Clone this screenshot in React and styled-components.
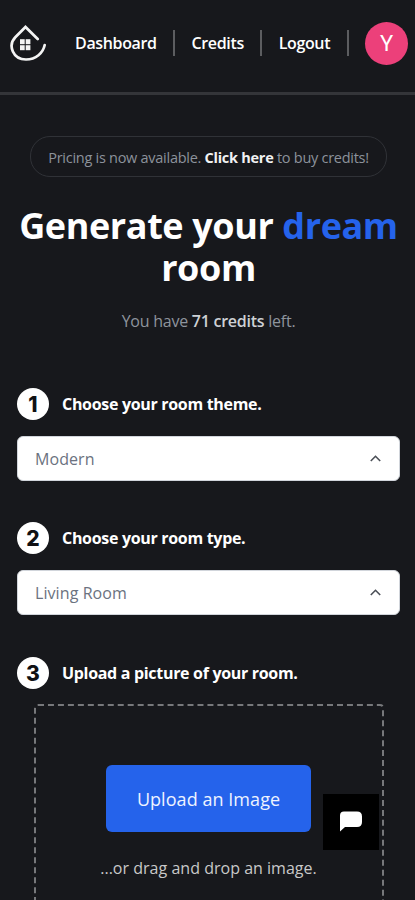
import React from "react";
import styled, { createGlobalStyle } from "styled-components";

const GlobalStyle = createGlobalStyle`
    * {
        box-sizing: border-box;
    }
    html, body {
        margin: 0;
        height: 100%;
        overflow: hidden;
        background-color: #17181c;
    }
    body {
        font-family: "Open Sans", "Noto Sans", sans-serif;
        color: #fff;
    }
`

const Root = styled.div`
    width: 100%;
    height: 900px;
    overflow: hidden;
    display: flex;
    flex-direction: column;
`

const Header = styled.header`
    height: 95px;
    flex-shrink: 0;
    display: flex;
    align-items: center;
    padding: 0 7px 6px 9px;
    border-bottom: 3px solid #343539;
`

const Logo = styled.svg`
    width: 38px;
    height: 38px;
    flex-shrink: 0;
    margin-right: 28px;
`

const Nav = styled.nav`
    flex: 1;
    display: flex;
    align-items: center;
    justify-content: space-between;
`

const Nav_link = styled.a`
    font-size: 16px;
    font-weight: 550;
    line-height: 24px;
    white-space: nowrap;
    letter-spacing: -0.35px;
`

const Divider = styled.span`
    width: 2px;
    height: 26px;
    background-color: #5c5d60;
`

const Avatar = styled.div`
    width: 43px;
    height: 43px;
    border-radius: 50%;
    background-color: #ec407a;
    display: flex;
    align-items: center;
    justify-content: center;
    font-family: Roboto, sans-serif;
    font-size: 22px;
`

const Main = styled.main`
    display: flex;
    flex-direction: column;
    align-items: center;
    padding: 41px 15px 0 17px;
`

const Notice = styled.div`
    width: 357px;
    height: 41px;
    border: 1px solid #303237;
    border-radius: 20px;
    display: flex;
    align-items: center;
    justify-content: center;
    white-space: pre;
    font-size: 14.5px;
    letter-spacing: -0.27px;
    color: #8c929b;
    padding-top: 1px;

    b {
        color: #f1f2f3;
    }
`

const Title = styled.h1`
    width: 400px;
    margin: 28px 0 0;
    text-align: center;
    font-size: 36px;
    line-height: 42px;
    font-weight: 700;
    letter-spacing: -0.4px;

    span {
        color: #2563eb;
    }
`

const Credits_left = styled.p`
    margin: 20px 0 0;
    font-size: 16px;
    line-height: 24px;
    letter-spacing: -0.25px;
    color: #8e949d;

    b {
        font-weight: 650;
        color: #ced1d5;
    }
`

const Step = styled.div`
    width: 100%;
    height: 32px;
    margin-top: ${props => props.$top};
    display: flex;
    align-items: center;
    gap: 13px;
`

const Step_number = styled.div`
    width: 32px;
    height: 32px;
    border-radius: 50%;
    background-color: #fff;
    color: #101114;
    display: flex;
    align-items: center;
    justify-content: center;
    font-family: Inter, sans-serif;
    font-size: 21px;
    font-weight: 800;
`

const Step_label = styled.p`
    margin: 0;
    font-size: 16px;
    font-weight: 700;
    letter-spacing: -0.31px;
`

const Select = styled.button`
    width: 383px;
    height: 45px;
    margin-top: 16px;
    padding: 0 17px;
    border: 1px solid #d1d5db;
    border-radius: 6px;
    background-color: #fff;
    display: flex;
    align-items: center;
    justify-content: space-between;
    font-family: inherit;
    font-size: 16px;
    letter-spacing: 0.08px;
    color: #6b7280;
`

const Dropzone = styled.div`
    width: 350px;
    height: 250px;
    margin-top: 15px;
    border: 2px dashed #77787b;
    border-radius: 4px;
    display: flex;
    flex-direction: column;
    align-items: center;
    padding-top: 59px;
`

const Upload_button = styled.button`
    width: 205px;
    height: 67px;
    border: none;
    border-radius: 6px;
    background-color: #2563eb;
    color: #eef3ff;
    font-family: inherit;
    font-size: 18px;
    font-weight: 500;
    letter-spacing: 0.05px;
`

const Drop_hint = styled.p`
    margin: 24px 0 0;
    font-size: 16px;
    font-weight: 500;
    line-height: 24px;
    letter-spacing: 0.02px;
    color: #c9c9c9;
`

// floats over the page in the bottom right corner
const Chat_button = styled.button`
    position: fixed;
    left: 323px;
    top: 794px;
    width: 56px;
    height: 56px;
    padding: 0;
    border: none;
    background-color: #000;
    display: flex;
    align-items: center;
    justify-content: center;
`

const Chevron = () => (
    <svg width="13" height="9" viewBox="0 0 13 9" fill="none" stroke="#4b4f57" strokeWidth="1.6">
        <path d="M1.8 7 L6.5 2.3 L11.2 7" />
    </svg>
)

const App = () => {
    return (
        <>
            <GlobalStyle />
            <Root>
                <Header>
                    <Logo viewBox="0 0 38 38" fill="none" stroke="#f4f4f4" strokeWidth="2.7" strokeLinecap="round">
                        <path d="M28.7 15 L16.5 3 L6.3 13.3 C-1.5 21.5 4 35.5 17 35.5 C27 35.5 34 29 35.7 21" />
                        <g fill="#f4f4f4" stroke="none">
                            <rect x="11" y="15.2" width="4.7" height="5" />
                            <rect x="16.7" y="15.2" width="4.7" height="5" />
                            <rect x="11" y="21.2" width="4.7" height="5" />
                            <rect x="16.7" y="21.2" width="4.7" height="5" />
                        </g>
                    </Logo>
                    <Nav>
                        <Nav_link>Dashboard</Nav_link>
                        <Divider />
                        <Nav_link>Credits</Nav_link>
                        <Divider />
                        <Nav_link>Logout</Nav_link>
                        <Divider />
                        <Avatar>Y</Avatar>
                    </Nav>
                </Header>
                <Main>
                    <Notice>Pricing is now available. <b>Click here</b> to buy credits!</Notice>
                    <Title>Generate your <span>dream</span> room</Title>
                    <Credits_left>You have <b>71 credits</b> left.</Credits_left>

                    <Step $top="55px">
                        <Step_number>1</Step_number>
                        <Step_label>Choose your room theme.</Step_label>
                    </Step>
                    <Select>Modern<Chevron /></Select>

                    <Step $top="41px">
                        <Step_number>2</Step_number>
                        <Step_label>Choose your room type.</Step_label>
                    </Step>
                    <Select>Living Room<Chevron /></Select>

                    <Step $top="42px">
                        <Step_number>3</Step_number>
                        <Step_label>Upload a picture of your room.</Step_label>
                    </Step>
                    <Dropzone>
                        <Upload_button>Upload an Image</Upload_button>
                        <Drop_hint>...or drag and drop an image.</Drop_hint>
                    </Dropzone>
                </Main>
                <Chat_button>
                    <svg width="24" height="22" viewBox="0 0 24 22" fill="#fff">
                        <path d="M5 0.5 H18 Q23 0.5 23 5.5 V11 Q23 16 18 16 H6 L1 20.5 V4.5 Q1 0.5 5 0.5 Z" />
                    </svg>
                </Chat_button>
            </Root>
        </>
    );
}

export default App;
